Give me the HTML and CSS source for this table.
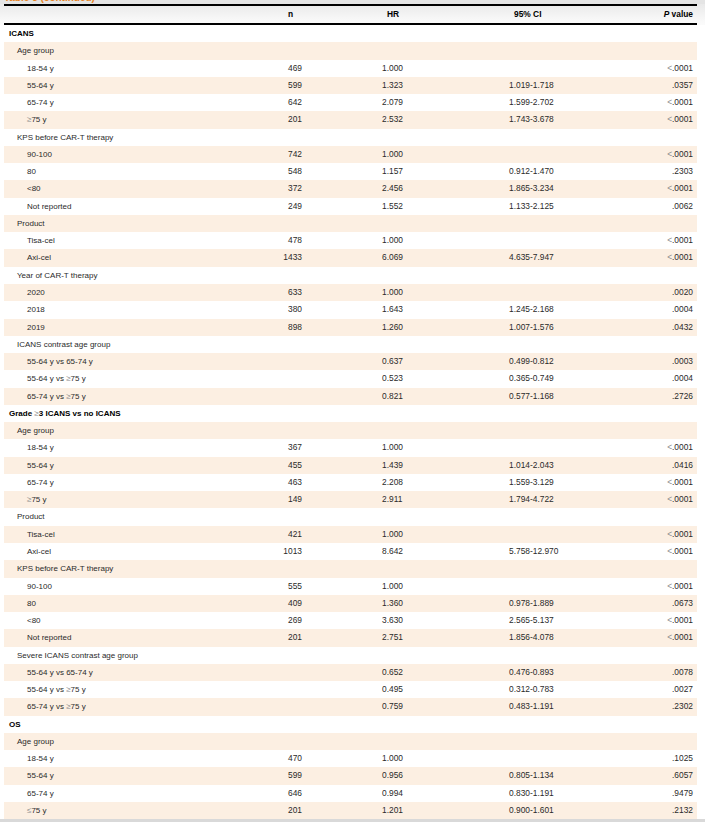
FILE: index.html
```html
<!DOCTYPE html>
<html lang="en">
<head>
<meta charset="utf-8">
<title>Table 3 (continued)</title>
<link rel="stylesheet" href="styles.css">
</head>
<body>
<div class="caption-band"><span class="caption">Table 3 (continued)</span></div>
<div class="head-band">
  <div class="row head">
    <div class="c-label"></div>
    <div class="c-n">n</div>
    <div class="c-hr">HR</div>
    <div class="c-ci">95% CI</div>
    <div class="c-p"><i>P</i> value</div>
  </div>
</div>
<div class="tbody">
  <div class="row"><div class="c-label l0 b">ICANS</div></div>
  <div class="row"><div class="c-label l1">Age group</div></div>
  <div class="row"><div class="c-label l2">18-54 y</div><div class="c-n">469</div><div class="c-hr">1.000</div><div class="c-ci"></div><div class="c-p"><span class="sym">&lt;</span>.0001</div></div>
  <div class="row"><div class="c-label l2">55-64 y</div><div class="c-n">599</div><div class="c-hr">1.323</div><div class="c-ci">1.019-1.718</div><div class="c-p">.0357</div></div>
  <div class="row"><div class="c-label l2">65-74 y</div><div class="c-n">642</div><div class="c-hr">2.079</div><div class="c-ci">1.599-2.702</div><div class="c-p"><span class="sym">&lt;</span>.0001</div></div>
  <div class="row"><div class="c-label l2"><span class="sym">&ge;</span>75 y</div><div class="c-n">201</div><div class="c-hr">2.532</div><div class="c-ci">1.743-3.678</div><div class="c-p"><span class="sym">&lt;</span>.0001</div></div>
  <div class="row"><div class="c-label l1">KPS before CAR-T therapy</div></div>
  <div class="row"><div class="c-label l2">90-100</div><div class="c-n">742</div><div class="c-hr">1.000</div><div class="c-ci"></div><div class="c-p"><span class="sym">&lt;</span>.0001</div></div>
  <div class="row"><div class="c-label l2">80</div><div class="c-n">548</div><div class="c-hr">1.157</div><div class="c-ci">0.912-1.470</div><div class="c-p">.2303</div></div>
  <div class="row"><div class="c-label l2">&lt;80</div><div class="c-n">372</div><div class="c-hr">2.456</div><div class="c-ci">1.865-3.234</div><div class="c-p"><span class="sym">&lt;</span>.0001</div></div>
  <div class="row"><div class="c-label l2">Not reported</div><div class="c-n">249</div><div class="c-hr">1.552</div><div class="c-ci">1.133-2.125</div><div class="c-p">.0062</div></div>
  <div class="row"><div class="c-label l1">Product</div></div>
  <div class="row"><div class="c-label l2">Tisa-cel</div><div class="c-n">478</div><div class="c-hr">1.000</div><div class="c-ci"></div><div class="c-p"><span class="sym">&lt;</span>.0001</div></div>
  <div class="row"><div class="c-label l2">Axi-cel</div><div class="c-n">1433</div><div class="c-hr">6.069</div><div class="c-ci">4.635-7.947</div><div class="c-p"><span class="sym">&lt;</span>.0001</div></div>
  <div class="row"><div class="c-label l1">Year of CAR-T therapy</div></div>
  <div class="row"><div class="c-label l2">2020</div><div class="c-n">633</div><div class="c-hr">1.000</div><div class="c-ci"></div><div class="c-p">.0020</div></div>
  <div class="row"><div class="c-label l2">2018</div><div class="c-n">380</div><div class="c-hr">1.643</div><div class="c-ci">1.245-2.168</div><div class="c-p">.0004</div></div>
  <div class="row"><div class="c-label l2">2019</div><div class="c-n">898</div><div class="c-hr">1.260</div><div class="c-ci">1.007-1.576</div><div class="c-p">.0432</div></div>
  <div class="row"><div class="c-label l1">ICANS contrast age group</div></div>
  <div class="row"><div class="c-label l2">55-64 y vs 65-74 y</div><div class="c-n"></div><div class="c-hr">0.637</div><div class="c-ci">0.499-0.812</div><div class="c-p">.0003</div></div>
  <div class="row"><div class="c-label l2">55-64 y vs <span class="sym">&ge;</span>75 y</div><div class="c-n"></div><div class="c-hr">0.523</div><div class="c-ci">0.365-0.749</div><div class="c-p">.0004</div></div>
  <div class="row"><div class="c-label l2">65-74 y vs <span class="sym">&ge;</span>75 y</div><div class="c-n"></div><div class="c-hr">0.821</div><div class="c-ci">0.577-1.168</div><div class="c-p">.2726</div></div>
  <div class="row"><div class="c-label l0 b">Grade <span class="sym">&ge;</span>3 ICANS vs no ICANS</div></div>
  <div class="row"><div class="c-label l1">Age group</div></div>
  <div class="row"><div class="c-label l2">18-54 y</div><div class="c-n">367</div><div class="c-hr">1.000</div><div class="c-ci"></div><div class="c-p"><span class="sym">&lt;</span>.0001</div></div>
  <div class="row"><div class="c-label l2">55-64 y</div><div class="c-n">455</div><div class="c-hr">1.439</div><div class="c-ci">1.014-2.043</div><div class="c-p">.0416</div></div>
  <div class="row"><div class="c-label l2">65-74 y</div><div class="c-n">463</div><div class="c-hr">2.208</div><div class="c-ci">1.559-3.129</div><div class="c-p"><span class="sym">&lt;</span>.0001</div></div>
  <div class="row"><div class="c-label l2"><span class="sym">&ge;</span>75 y</div><div class="c-n">149</div><div class="c-hr">2.911</div><div class="c-ci">1.794-4.722</div><div class="c-p"><span class="sym">&lt;</span>.0001</div></div>
  <div class="row"><div class="c-label l1">Product</div></div>
  <div class="row"><div class="c-label l2">Tisa-cel</div><div class="c-n">421</div><div class="c-hr">1.000</div><div class="c-ci"></div><div class="c-p"><span class="sym">&lt;</span>.0001</div></div>
  <div class="row"><div class="c-label l2">Axi-cel</div><div class="c-n">1013</div><div class="c-hr">8.642</div><div class="c-ci">5.758-12.970</div><div class="c-p"><span class="sym">&lt;</span>.0001</div></div>
  <div class="row"><div class="c-label l1">KPS before CAR-T therapy</div></div>
  <div class="row"><div class="c-label l2">90-100</div><div class="c-n">555</div><div class="c-hr">1.000</div><div class="c-ci"></div><div class="c-p"><span class="sym">&lt;</span>.0001</div></div>
  <div class="row"><div class="c-label l2">80</div><div class="c-n">409</div><div class="c-hr">1.360</div><div class="c-ci">0.978-1.889</div><div class="c-p">.0673</div></div>
  <div class="row"><div class="c-label l2">&lt;80</div><div class="c-n">269</div><div class="c-hr">3.630</div><div class="c-ci">2.565-5.137</div><div class="c-p"><span class="sym">&lt;</span>.0001</div></div>
  <div class="row"><div class="c-label l2">Not reported</div><div class="c-n">201</div><div class="c-hr">2.751</div><div class="c-ci">1.856-4.078</div><div class="c-p"><span class="sym">&lt;</span>.0001</div></div>
  <div class="row"><div class="c-label l1">Severe ICANS contrast age group</div></div>
  <div class="row"><div class="c-label l2">55-64 y vs 65-74 y</div><div class="c-n"></div><div class="c-hr">0.652</div><div class="c-ci">0.476-0.893</div><div class="c-p">.0078</div></div>
  <div class="row"><div class="c-label l2">55-64 y vs <span class="sym">&ge;</span>75 y</div><div class="c-n"></div><div class="c-hr">0.495</div><div class="c-ci">0.312-0.783</div><div class="c-p">.0027</div></div>
  <div class="row"><div class="c-label l2">65-74 y vs <span class="sym">&ge;</span>75 y</div><div class="c-n"></div><div class="c-hr">0.759</div><div class="c-ci">0.483-1.191</div><div class="c-p">.2302</div></div>
  <div class="row"><div class="c-label l0 b">OS</div></div>
  <div class="row"><div class="c-label l1">Age group</div></div>
  <div class="row"><div class="c-label l2">18-54 y</div><div class="c-n">470</div><div class="c-hr">1.000</div><div class="c-ci"></div><div class="c-p">.1025</div></div>
  <div class="row"><div class="c-label l2">55-64 y</div><div class="c-n">599</div><div class="c-hr">0.956</div><div class="c-ci">0.805-1.134</div><div class="c-p">.6057</div></div>
  <div class="row"><div class="c-label l2">65-74 y</div><div class="c-n">646</div><div class="c-hr">0.994</div><div class="c-ci">0.830-1.191</div><div class="c-p">.9479</div></div>
  <div class="row"><div class="c-label l2"><span class="sym">&le;</span>75 y</div><div class="c-n">201</div><div class="c-hr">1.201</div><div class="c-ci">0.900-1.601</div><div class="c-p">.2132</div></div>
</div>
<div class="foot-band"></div>
</body>
</html>
```

FILE: styles.css
```css
html, body {
  margin: 0;
  padding: 0;
  background: #ffffff;
}
body {
  width: 705px;
  height: 822px;
  overflow: hidden;
  font-family: "Liberation Sans", Arial, sans-serif;
  font-size: 8.4px;
  color: #2a2a2a;
}
.caption-band {
  height: 4px;
  overflow: hidden;
  background: #e4e4e4;
  padding-left: 4px;
}
.caption {
  display: block;
  margin-top: -7px;
  font-size: 10px;
  line-height: 10px;
  font-weight: bold;
  color: #e8821e;
}
.head-band {
  background: linear-gradient(#e9e9e9, #f7f7f7 70%, #fbfbfb);
  padding: 0 8px 0 4px;
}
.row {
  display: grid;
  grid-template-columns: 256px 42px 168px 150px 77px;
  height: 17.28px;
  line-height: 17.28px;
  white-space: nowrap;
}
.row.head {
  height: 17px;
  line-height: 17px;
  border-top: 2px solid #000;
  border-bottom: 2px solid #000;
  font-weight: bold;
  color: #000;
}
.head .c-n { text-align: right; padding-right: 9px; }
.head .c-hr { padding-left: 85px; }
.head .c-ci { padding-left: 44px; }
.tbody {
  margin: 0 8px 0 4px;
}
.tbody .row:nth-child(even) {
  background: #fcefe2;
}
.c-label { font-size: 8px; }
.c-n { text-align: right; }
.c-hr { padding-left: 80px; }
.c-ci { padding-left: 39px; }
.c-p { text-align: right; padding-right: 4px; }
.l0 { padding-left: 5px; }
.l1 { padding-left: 13px; }
.l2 { padding-left: 23px; }
.b { font-weight: bold; color: #000; }
.sym { color: #8a8a8a; font-weight: normal; }
.foot-band {
  height: 4px;
  background: #d9d9d9;
}
```
